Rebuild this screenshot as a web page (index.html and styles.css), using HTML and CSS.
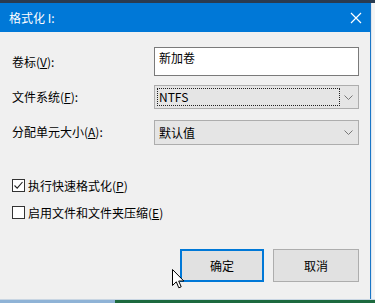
FILE: index.html
```html
<!DOCTYPE html>
<html lang="zh-CN">
<head>
<meta charset="utf-8">
<title>格式化 I:</title>
<link rel="stylesheet" href="styles.css">
</head>
<body>
<div class="screen">
  <div class="top-strip"></div>
  <div class="middle">
    <div class="dialog">
      <div class="titlebar">
        <span class="title">格式化 I:</span>
        <svg class="close" width="12" height="12" viewBox="0 0 12 12"><path d="M1 1 L11 11 M11 1 L1 11" stroke="#fff" stroke-width="1.2" fill="none"/></svg>
      </div>
      <div class="content">
        <div class="form">
          <label class="label">卷标(<u>V</u>):</label>
          <div class="textbox">新加卷</div>
          <label class="label">文件系统(<u>F</u>):</label>
          <div class="combo"><span class="focus">NTFS</span><svg class="chev" width="9" height="5" viewBox="0 0 9 5"><path d="M0.5 0.5 L4.5 4.5 L8.5 0.5" stroke="#777" stroke-width="1" fill="none"/></svg></div>
          <label class="label">分配单元大小(<u>A</u>):</label>
          <div class="combo combo-2"><span class="val">默认值</span><svg class="chev" width="9" height="5" viewBox="0 0 9 5"><path d="M0.5 0.5 L4.5 4.5 L8.5 0.5" stroke="#777" stroke-width="1" fill="none"/></svg></div>
        </div>
        <div class="checks">
          <div class="check"><span class="box"><svg width="11" height="11" viewBox="0 0 11 11"><path d="M1.5 5.5 L4.2 8.2 L9.5 2" stroke="#222" stroke-width="1.1" fill="none"/></svg></span><span>执行快速格式化(<u>P</u>)</span></div>
          <div class="check"><span class="box"></span><span>启用文件和文件夹压缩(<u>E</u>)</span></div>
        </div>
        <div class="buttons">
          <div class="btn btn-ok">确定</div>
          <div class="btn">取消</div>
        </div>
        <svg class="cursor" width="13" height="21" viewBox="0 0 13 21"><path d="M0.5 0.5 L0.5 16.5 L4.3 12.8 L6.8 18.8 L9.2 17.8 L6.7 12 L11.8 12 Z" fill="#fff" stroke="#000" stroke-width="1"/></svg>
      </div>
    </div>
    <div class="side"></div>
  </div>
  <div class="bottom-strip"><span class="bl"></span><span class="br"></span></div>
</div>
</body>
</html>
```

FILE: styles.css
```css
* { box-sizing: border-box; }
html, body { margin: 0; padding: 0; }
body {
  font-family: "Noto Sans CJK SC", "Noto Sans", sans-serif;
  font-size: 12px;
  color: #000;
  background: #f0f0f0;
}
.screen {
  width: 375px;
  height: 303px;
  overflow: hidden;
  display: flex;
  flex-direction: column;
}
.top-strip {
  height: 3px;
  background: #2a3b50;
  flex: none;
}
.middle {
  display: flex;
  height: 296px;
  flex: none;
}
.dialog {
  width: 371px;
  display: flex;
  flex-direction: column;
  background: #f0f0f0;
  border-right: 1px solid #1a76c6;
}
.titlebar {
  height: 29px;
  background: #0078d7;
  display: flex;
  align-items: center;
  justify-content: space-between;
  padding: 0 8px 0 9px;
  color: #fff;
  flex: none;
}
.title { line-height: 1; }
.content {
  position: relative;
  flex: 1;
  padding: 15px 11px 0 12px;
}
.form {
  display: grid;
  grid-template-columns: 142px 205px;
  grid-template-rows: 29px 24px 25px;
  row-gap: 9px;
  align-items: center;
}
.form .combo-2 { margin-top: 3px; }
.form .label:nth-of-type(3) { margin-top: 3px; }
.label { line-height: 1; }
.label u, .check u { text-decoration: underline; text-underline-offset: 1px; }
.textbox {
  height: 29px;
  background: #fff;
  border: 1px solid #7a7a7a;
  padding: 2px 4px;
  line-height: 16px;
}
.combo {
  height: 24px;
  background: #e5e5e5;
  border: 1px solid #adadad;
  display: flex;
  align-items: center;
  justify-content: space-between;
  padding: 0 5px 0 2px;
}
.combo-2 { height: 25px; }
.focus {
  width: 183px;
  height: 18px;
  border: 1px dotted #222;
  padding: 0 1px;
  line-height: 16px;
  background: #e5e5e5;
}
.val { padding-left: 2px; }
.chev { flex: none; }
.checks {
  margin-top: 36px;
  display: flex;
  flex-direction: column;
  gap: 14px;
}
.check {
  display: flex;
  align-items: center;
  gap: 3px;
  height: 13px;
  line-height: 1;
}
.box {
  width: 13px;
  height: 13px;
  border: 1px solid #333;
  background: #fff;
  display: flex;
  align-items: center;
  justify-content: center;
  flex: none;
}
.buttons {
  margin-top: 30px;
  display: flex;
  justify-content: flex-end;
  gap: 9px;
}
.btn {
  width: 86px;
  height: 33px;
  background: #e1e1e1;
  border: 1px solid #adadad;
  display: flex;
  align-items: center;
  justify-content: center;
}
.btn-ok {
  width: 84px;
  border: 2px solid #0078d7;
}
.cursor {
  position: absolute;
  left: 172px;
  top: 237px;
}
.side {
  flex: 1;
  background: #f4f4f4;
  border-left: 1px solid #dfe6ee;
}
.bottom-strip {
  display: flex;
  height: 4px;
  flex: none;
  border-top: 1px solid #c9d6e3;
}
.bl { width: 115px; background: #8fb3d6; }
.br { flex: 1; background: #1d6a3f; }
```
